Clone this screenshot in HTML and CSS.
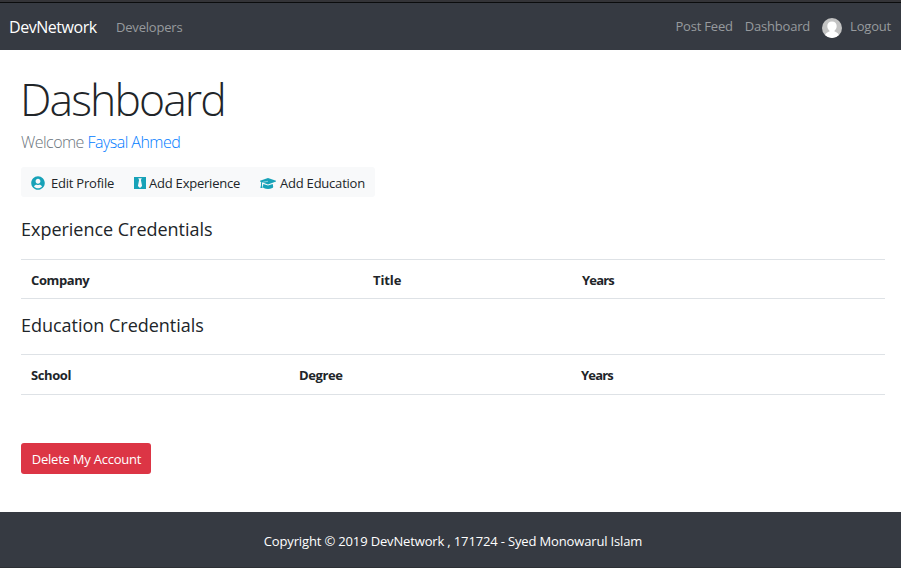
FILE: index.html
```html
<!DOCTYPE html>
<html lang="en">
<head>
<meta charset="utf-8">
<title>DevNetwork</title>
<link rel="stylesheet" href="styles.css">
</head>
<body>
<nav class="navbar">
  <a class="brand">DevNetwork</a>
  <a class="nav-link">Developers</a>
  <div class="nav-right">
    <a class="nav-link">Post Feed</a>
    <a class="nav-link">Dashboard</a>
    <a class="nav-link logout">
      <svg class="avatar" viewBox="0 0 20 20"><defs><clipPath id="round"><circle cx="10" cy="10" r="10"/></clipPath></defs><g clip-path="url(#round)"><path fill="#c3c3c3" d="M0 0h20v20H0z"/><path fill="#fff" d="M10 3.400c3 0 4.700 2 4.700 4.600 0 2-.9 3.800-2.200 4.700v.8c2.500.8 4.500 1.800 4.900 6.500H2.600c.4-4.700 2.400-5.700 4.900-6.500v-.8C6.200 11.800 5.300 10 5.300 8c0-2.600 1.700-4.600 4.700-4.600z"/></g></svg>
      <span>Logout</span>
    </a>
  </div>
</nav>
<main class="container">
  <h1 class="title">Dashboard</h1>
  <p class="lead">Welcome <a class="link">Faysal Ahmed</a></p>
  <div class="actions">
    <a class="action profile"><svg class="icon" viewBox="0 0 496 512"><path d="M248 8C111 8 0 119 0 256s111 248 248 248 248-111 248-248S385 8 248 8zm0 96c48.600 0 88 39.400 88 88s-39.400 88-88 88-88-39.400-88-88 39.400-88 88-88zm0 344c-58.700 0-111.300-26.600-146.500-68.200 18.800-35.400 55.600-59.800 98.500-59.800 2.400 0 4.800.4 7.100 1.100 13 4.200 26.600 6.900 40.900 6.900s28-2.700 40.900-6.900c2.300-.7 4.700-1.100 7.100-1.100 42.900 0 79.700 24.400 98.500 59.800C359.300 421.400 306.700 448 248 448z"/></svg><span>Edit Profile</span></a>
    <a class="action experience"><svg class="icon" viewBox="0 0 12 12"><path fill-rule="evenodd" d="M0 0h12v12H0zM4.200 1.200l.9 1.700L3.900 9 6 11l2.100-2-1.200-6.100.9-1.700z"/></svg><span>Add Experience</span></a>
    <a class="action education"><svg class="icon" viewBox="0 0 16 13"><path d="M8 1L16 3.800v.7L8 7.400 0 4.500v-.7zM1 5l1 .4v2.500l.6 3.100H.4L1 7.900zM3.300 7L8 8.600 12.800 7l.4 3c0 1-2.200 1.900-5.200 1.900S2.900 11 2.900 10z"/><path class="cord" d="M8 4.300L3 5.200"/></svg><span>Add Education</span></a>
  </div>
  <h2 class="heading">Experience Credentials</h2>
  <table class="table experience-table">
    <thead><tr><th class="company">Company</th><th class="job">Title</th><th class="years">Years</th></tr></thead>
  </table>
  <h2 class="heading">Education Credentials</h2>
  <table class="table education-table">
    <thead><tr><th class="school">School</th><th class="degree">Degree</th><th class="years">Years</th></tr></thead>
  </table>
  <button class="danger">Delete My Account</button>
</main>
<footer class="footer">Copyright © 2019 DevNetwork , 171724 - Syed Monowarul Islam</footer>
</body>
</html>
```
FILE: styles.css
```css
* { box-sizing: border-box; }

body {
  display: flex;
  flex-direction: column;
  height: 568px;
  margin: 0;
  overflow: hidden;
  background: #fff;
  color: #212529;
  font: 13px/20px "Open Sans", sans-serif;
}

.navbar {
  display: flex;
  align-items: center;
  flex: none;
  height: 50px;
  padding: 4px 10px 0 9px;
  background: linear-gradient(#343438 2px, #0b0c0d 2px, #0b0c0d 3px, #363a42 3px);
}

.brand {
  width: 107px;
  color: #fff;
  font-size: 16px;
  letter-spacing: -.45px;
}

.nav-link { color: #979a9e; letter-spacing: -.2px; }

.nav-right {
  display: flex;
  gap: 12px;
  margin-left: auto;
  padding-bottom: 2px;
}

.logout { display: flex; align-items: center; gap: 8px; }
.avatar { display: block; width: 20px; height: 20px; margin: 2px 0 -2px; }

.container { flex: 1; padding: 21px 16px 0 21px; }

.title {
  margin: 0 0 3px -1px;
  font-size: 44.5px;
  font-weight: 300;
  line-height: 56px;
  letter-spacing: -1.9px;
}

.lead {
  margin: 0 0 13px;
  color: #6c757d;
  font-size: 16px;
  font-weight: 300;
  line-height: 24px;
  letter-spacing: -.53px;
}

.link { color: #007bff; }

.actions {
  display: flex;
  align-items: center;
  width: 354px;
  height: 30px;
  margin-bottom: 22px;
  padding: 2px 0 0 10px;
  border-radius: 3px;
  background: #f8f9fa;
  letter-spacing: -.22px;
  white-space: nowrap;
}

.action { display: flex; align-items: center; }
.icon { display: block; flex: none; fill: #17a2b8; }
.cord { fill: none; stroke: #f8f9fa; stroke-width: .5; }
.profile { width: 103px; }
.profile .icon { width: 14px; height: 14px; margin-right: 6px; }
.experience { width: 126px; }
.experience .icon { width: 12px; height: 12px; margin-right: 3px; }
.education .icon { width: 16px; height: 13px; margin-right: 4px; }

.heading {
  margin: 0 0 20px;
  font-size: 18px;
  font-weight: 400;
  line-height: 20px;
  letter-spacing: -.02px;
}

.table {
  width: 100%;
  border-collapse: separate;
  border-spacing: 0;
  table-layout: fixed;
}

.table th {
  padding: 2px 10px 0;
  border-top: 1px solid #dee2e6;
  border-bottom: 1px solid #dee2e6;
  text-align: left;
  font-weight: 700;
  letter-spacing: -.4px;
}

.table .job { letter-spacing: -.1px; }
.table .years { letter-spacing: -.8px; }

.experience-table { height: 40px; margin-bottom: 16px; }
.education-table { height: 41px; margin: -1px 0 48px; }
.education-table th { padding: 1px 10px 0; }
.company { width: 342px; }
.job { width: 209px; }
.school { width: 268px; }
.degree { width: 282px; }

.danger {
  display: block;
  width: 130px;
  height: 31px;
  padding: 0 0 0 1px;
  border: 0;
  border-radius: 3px;
  background: #dc3545;
  color: #fff;
  font: inherit;
  letter-spacing: -.22px;
}

.footer {
  flex: none;
  height: 56px;
  padding: 19px 0 0 5px;
  border-bottom: 1px solid #2d3035;
  background: #363a42;
  color: #fff;
  text-align: center;
  letter-spacing: -.15px;
}
```
